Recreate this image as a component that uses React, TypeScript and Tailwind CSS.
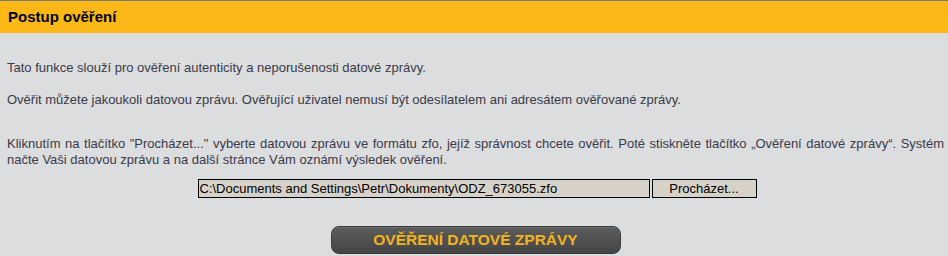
import React from 'react';

const App: React.FC = () => {
  return (
    <div className="w-[948px] h-[256px] overflow-hidden bg-[#dcdddf] font-['Liberation_Sans',Arial,sans-serif]">
      {/* Header */}
      <div className="h-[33px] border-t border-[#7b7b7b] bg-[#fbb817] flex items-center px-[8px]">
        <h1 className="text-[15px] font-bold text-black">Postup ověření</h1>
      </div>

      {/* Content */}
      <div className="pl-[7px] pr-[4px] text-[13px] leading-[16px] text-[#3a3a48]">
        <p className="mt-[27px]">Tato funkce slouží pro ověření autenticity a neporušenosti datové zprávy.</p>
        <p className="mt-[16px]">
          Ověřit můžete jakoukoli datovou zprávu. Ověřující uživatel nemusí být odesílatelem ani adresátem ověřované zprávy.
        </p>
        <p className="mt-[28px] text-justify">
          Kliknutím na tlačítko "Procházet..." vyberte datovou zprávu ve formátu zfo, jejíž správnost chcete ověřit. Poté stiskněte tlačítko „Ověření datové zprávy“. Systém načte Vaši datovou zprávu a na další stránce Vám oznámí výsledek ověření.
        </p>

        {/* File picker */}
        <div className="mt-[11px] ml-[3px] flex justify-center gap-[2px]">
          <div className="w-[452px] h-[19px] border border-black bg-[#d6d2ca] px-[1px] text-[13px] leading-[17px] text-black truncate">
            C:\Documents and Settings\Petr\Dokumenty\ODZ_673055.zfo
          </div>
          <button className="w-[105px] h-[19px] border border-black bg-[#d6d2ca] text-[13px] leading-[17px] text-black">
            Procházet...
          </button>
        </div>

        {/* Submit */}
        <div className="mt-[28px] flex justify-center">
          <button className="w-[290px] h-[28px] rounded-[8px] border border-[#3a3a3a] bg-gradient-to-b from-[#5c5c5c] to-[#454545] shadow-[inset_0_1px_0_#6e6e6e] text-[15.5px] font-bold text-[#f4b320]">
            OVĚŘENÍ DATOVÉ ZPRÁVY
          </button>
        </div>
      </div>
    </div>
  );
};

export default App;
